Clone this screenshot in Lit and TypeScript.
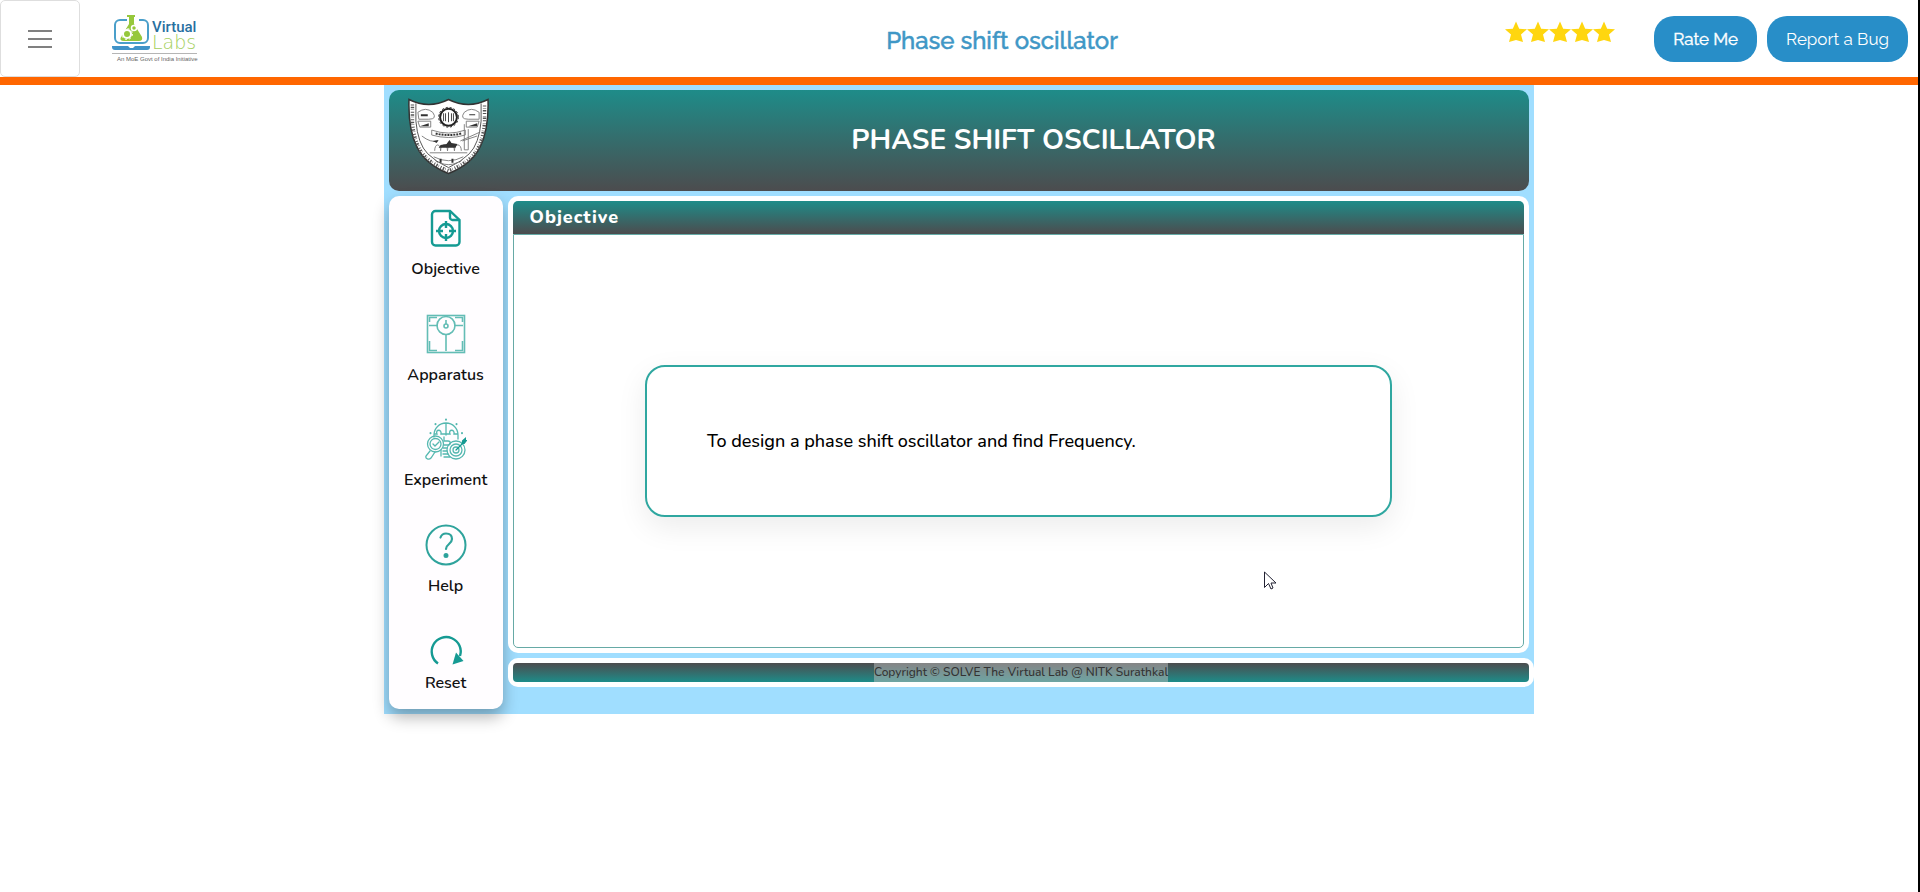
import { LitElement, html, css, svg } from "lit";
import { customElement } from "lit/decorators.js";

const TEAL = "#159a93";

const iconObjective = svg`<svg width="42" height="42" viewBox="0 0 42 42" fill="none" stroke="${TEAL}" stroke-width="2.4" aria-hidden="true">
  <path d="M10.5 4H25l9.500 9v22a3.500 3.500 0 0 1-3.500 3.500H10.500A3.500 3.500 0 0 1 7 35V7.500A3.500 3.500 0 0 1 10.500 4Z"/>
  <path d="M25 4v6.500a2.500 2.500 0 0 0 2.500 2.500h7"/>
  <circle cx="21" cy="24" r="7"/><path d="M21 14v7M21 27v7M11 24h7M24 24h7"/></svg>`;

const iconApparatus = svg`<svg width="42" height="42" viewBox="0 0 42 42" fill="none" stroke="#63bdb5" stroke-width="1.600" aria-hidden="true">
  <rect x="2.500" y="2.500" width="37" height="37"/><path d="M4.500 9V4.500H12M30 4.500h7.500V9M4.500 28v9.500H12M30 37.500h7.500V28"/>
  <path d="M4 12.500h9M29 12.500h9M21 22v16"/><circle cx="21" cy="12.500" r="9"/><circle cx="21" cy="13" r="2"/><path d="M21 7v4"/></svg>`;

const iconExperiment = svg`<svg width="42" height="42" viewBox="0 0 42 42" fill="none" stroke="#55b8b0" stroke-width="1.300" stroke-linecap="round" aria-hidden="true">
  <path d="M9 19V17a12 12 0 0 1 24 0v4M21 5v12M9 16h3c-2-5 5-5 4 0h5M21 16h4c-2-5 5-5 4 0h4M19 19v4h4c3 0 3 4 0 4h-4M18 30h4M18 33h4M18 36h5M19 39h6"/>
  <path d="M21 1.500v.200M10.500 6v.200M31.500 6v.200M5.500 15v.200M37 15v.200" stroke-width="2"/>
  <circle cx="10.500" cy="26" r="8"/><circle cx="10.500" cy="26" r="5.500"/><path d="m8 26 2 2 4-4M5 33l-4 5c-1 3 3 4 5 2l4-6M16 32v6"/>
  <circle cx="31" cy="32" r="9"/><circle cx="31" cy="32" r="6"/><circle cx="31" cy="32" r="3"/><path d="m31 32 9-9" stroke="${TEAL}"/><path d="m36.500 26 .500-3.500 4-3.500v3h1.500l-3 4Z" fill="${TEAL}" stroke="none"/></svg>`;

const iconHelp = svg`<svg width="42" height="42" viewBox="0 0 42 42" fill="none" stroke="#2fa39c" stroke-width="2" aria-hidden="true">
  <circle cx="21" cy="21" r="19.500"/><path stroke-width="2.200" stroke-linecap="round" d="M15.500 13.500c1-3 3-4 5.500-4 3.500 0 6 2 6 5.500 0 5-6 5-6 10"/><circle cx="21" cy="31.500" r="1.500" fill="${TEAL}"/></svg>`;

const iconReset = svg`<svg width="42" height="42" viewBox="0 -5 42 42" fill="none" stroke="${TEAL}" stroke-width="2.400" aria-hidden="true">
  <path d="M13 29.500A14.500 14.500 0 1 1 35 22"/><path d="M31 18.500 38.500 27 27.500 30.500Z" fill="${TEAL}" stroke="none"/></svg>`;

const items = [
  { label: "Objective", icon: iconObjective },
  { label: "Apparatus", icon: iconApparatus },
  { label: "Experiment", icon: iconExperiment },
  { label: "Help", icon: iconHelp },
  { label: "Reset", icon: iconReset },
];

@customElement("lab-topbar")
export class LabTopbar extends LitElement {
  static styles = css`
    :host { display: block; border-bottom: 8px solid #ff6600; font-family: Raleway, Lato, sans-serif; }
    .bar { display: grid; grid-template-columns: 1fr auto 1fr; height: 77px; background: #fff; }
    .left { display: flex; align-items: center; gap: 32px; }
    .burger { width: 80px; height: 77px; border: 1px solid #dedede; border-radius: 5px; background: #fff; padding: 0;
      display: flex; flex-direction: column; align-items: center; justify-content: center; gap: 6px; }
    .line { width: 24px; height: 2px; background: #808080; }
    .logo { display: block; }
    .title { margin: 0; align-self: center; padding: 4px 0 0 86px; font-size: 24px; line-height: 30px; font-weight: 500; color: #3f97c6; -webkit-text-stroke: 0.500px #3f97c6; }
    .right { display: flex; justify-content: flex-end; align-items: center; padding-right: 10px; }
    .stars { display: flex; margin-right: 39px; padding-bottom: 14px; }
    .buttons { display: flex; gap: 10px; }
    .pill { height: 46px; border: 0; border-radius: 20px; background: #288ec8; color: #fff; padding: 0 19px;
      font-family: inherit; font-size: 17px; line-height: 24px; }
    .pill.strong { -webkit-text-stroke: 0.400px #fff; }
  `;
  render() {
    return html`<header class="bar">
      <div class="left">
        <button class="burger" aria-label="Menu"><span class="line"></span><span class="line"></span><span class="line"></span></button>
        <svg class="logo" width="88" height="50" viewBox="0 0 88 50" role="img" aria-label="Virtual Labs">
          <path d="M15 6H8a5 5 0 0 0-5 5v13a5 5 0 0 0 5 5h23a5 5 0 0 0 5-5V11a5 5 0 0 0-5-5h-4" fill="none" stroke="#4a9fca" stroke-width="2"/>
          <path d="M0 32h16l2 2h3l2-2h15v1q0 3-3 3H3q-3 0-3-3Z" fill="#3f93c8"/>
          <path d="M15 1h8v2h-1v7l8 13q1 4-3 4H12q-5 0-3-4l8-13V3h-2Z" fill="#96c83c"/>
          <circle cx="15" cy="20" r="4" fill="none" stroke="#fff" stroke-width="2"/><circle cx="15" cy="20" r="5.500" fill="none" stroke="#fff" stroke-dasharray="2 2.300"/>
          <circle cx="22" cy="14" r="2.500" fill="none" stroke="#fff" stroke-width="1.500"/>
          <text x="40" y="18" font-family="Roboto, sans-serif" font-size="15" font-weight="500" fill="#286f9f">Virtual</text>
          <text x="40" y="35" font-family="DejaVu Sans, sans-serif" font-size="19" font-weight="200" fill="#a4cf5c">Labs</text>
          <path d="M0 39.500h85" stroke="#b5b5b5"/>
          <text x="5" y="47" font-family="Liberation Sans, sans-serif" font-size="6" fill="#666">An MoE Govt of India Initiative</text>
        </svg>
      </div>
      <h1 class="title">Phase shift oscillator</h1>
      <div class="right">
        <div class="stars" role="img" aria-label="5 stars">
          ${[0, 1, 2, 3, 4].map(() => html`<svg width="22" height="22" viewBox="0 0 22 22"><path d="M11 .500 14.200 7.700 22 8.200l-6 5.300 2 7.500-7-2-7 2 2-7.500L0 8.200l7.800-.500Z" fill="#ffd60f"/></svg>`)}
        </div>
        <div class="buttons"><button class="pill strong">Rate Me</button><button class="pill">Report a Bug</button></div>
      </div>
    </header>`;
  }
}

@customElement("lab-simulator")
export class LabSimulator extends LitElement {
  static styles = css`
    :host { display: grid; grid-template-columns: 114px 1fr; gap: 5px; width: 60%; box-sizing: border-box; margin: 0 auto;
      padding: 5px; background: #a0deff; font-family: Nunito, "Noto Sans", sans-serif; }
    .banner { grid-column: 1 / -1; height: 101px; box-sizing: border-box; border-radius: 10px; display: flex; align-items: flex-start; padding: 8px 19px;
      background: linear-gradient(#1e8c89, #4c4c4e); }
    .crest { display: block; }
    .banner-title { flex: 1; margin: 0; padding-left: 68px; text-align: center; font-size: 28px; line-height: 84px; font-weight: 700; color: #fff; }
    .side { height: 513px; box-sizing: border-box; display: flex; flex-direction: column; align-items: center; justify-content: space-between;
      padding: 11px 0 14px; background: #fffdff; border-radius: 10px; box-shadow: 0 8px 16px rgba(0, 0, 0, 0.300); }
    .item { border: 0; background: none; padding: 0; display: flex; flex-direction: column; align-items: center; gap: 8px;
      font-family: inherit; font-size: 16px; line-height: 24px; font-weight: 600; color: #111; }
    .item:last-child { gap: 0; }
    .work { display: flex; flex-direction: column; gap: 5px; }
    .panel { height: 457px; box-sizing: border-box; padding: 5px; background: #fff; border-radius: 10px; display: flex; flex-direction: column; }
    .panel-title { margin: 0; padding: 0 17px; font-size: 18px; line-height: 33px; font-weight: 800; letter-spacing: 1px; color: #fff;
      border-radius: 5px 5px 0 0; background: linear-gradient(#1e8c89, #4c4c4e); }
    .stage { flex: 1; display: flex; align-items: center; justify-content: center; border: 1px solid #66aaa6; border-radius: 0 0 5px 5px; }
    .card { width: 74%; box-sizing: border-box; padding: 60px; border: 2px solid #2fa7a0; border-radius: 20px; box-shadow: 0 10px 30px rgba(0, 0, 0, 0.080);
      font-size: 18px; line-height: 28px; font-weight: 500; color: #000; margin: 0; }
    .foot { margin-right: -5px; padding: 5px; background: #fff; border-radius: 10px; }
    .foot-bar { display: flex; justify-content: center; border-radius: 4px; background: linear-gradient(#4c4c4e, #1e8c89); }
    .copy { font-size: 12px; line-height: 19px; font-weight: 500; color: #333; background: rgba(190, 190, 190, 0.500); }
  `;
  render() {
    return html`
      <header class="banner">
        <svg class="crest" width="81" height="78" viewBox="0 0 82 78" role="img" aria-label="NITK Surathkal">
          <path d="M1 1q20 10 40 0 20 10 40 0Q82 31 73 49 64 67 41 76 18 67 9 49 0 31 1 1Z" fill="#fff" stroke="#333" stroke-width="1.500"/>
          <path d="M8 5v18q2 23 12 33 8 8 21 14 13-6 21-14 10-10 12-33V5" fill="none" stroke="#555"/>
          <path d="M4.500 6v18q2 24 13 35 9 9 23.500 14 14.500-5 23.500-14 11-11 13-35V6" fill="none" stroke="#555" stroke-width="3.500" stroke-dasharray="1 1.500 1.500 1 .500 2"/>
          <circle cx="41" cy="19" r="8.500" fill="#fff" stroke="#222" stroke-width="2"/><circle cx="41" cy="19" r="10" fill="none" stroke="#222" stroke-dasharray="2 2"/>
          <path d="M36 15v8M38 15v8M41 14v10M44 15v8M46 15v8" stroke="#444" fill="none"/>
          <g fill="none" stroke="#777" stroke-width=".900"><path d="M10 14q8-6 15 0 5 7-4 7H11zM10 23h13v6H12zM72 14q-8-6-15 0-5 7 4 7h11zM72 23H59v6h11z"/>
          <path d="M24 32q17 6 34 0v5q-17 5-34 0ZM14 38q9 7 16 5M73 34 53 43M70 38l-15 5M57 26v26h4V31M27 53c0-8 6-8 6 0 0-8 7-8 7 0 0-8 7-8 7 0 0-8 7-8 7 0M22 55h38M26 59q15 8 30 0M32 65q9 4 18 0M25 60l5 5M52 65l5-5"/></g>
          <path d="M31 50h17l2-4-6-1-2-3-3 4-6 1ZM12 28l9-3v3zM61 28h9v-3zM25 43l6-1-2 3zM32 61h2v4h-2zM44 61h2v4h-2zM13 16h7v2h-7zM62 16h6v1h-6z" fill="#333"/>
          <path d="M28 35.500q13 3 26 0" fill="none" stroke="#333" stroke-width="2" stroke-dasharray="2 1"/>
        </svg>
        <h2 class="banner-title">PHASE SHIFT OSCILLATOR</h2>
      </header>
      <nav class="side">${items.map((i) => html`<button class="item">${i.icon}<span>${i.label}</span></button>`)}</nav>
      <main class="work">
        <section class="panel">
          <h3 class="panel-title">Objective</h3>
          <div class="stage"><p class="card">To design a phase shift oscillator and find Frequency.</p></div>
        </section>
        <footer class="foot"><div class="foot-bar"><span class="copy">Copyright © SOLVE The Virtual Lab @ NITK Surathkal</span></div></footer>
      </main>`;
  }
}

@customElement("app-root")
export class AppRoot extends LitElement {
  static styles = css`
    :host { display: block; position: relative; min-height: 100vh; box-sizing: border-box; border-right: 2px solid #000; background: #fff; }
    .cursor { position: absolute; left: 1264px; top: 571px; }
  `;
  render() {
    return html`<lab-topbar></lab-topbar><lab-simulator></lab-simulator>
      <svg class="cursor" width="13" height="20" viewBox="0 0 13 20" aria-hidden="true"><path d="M.500 1v15.500l4-4 2.500 5.500 2-1-2-5h5Z" fill="#fff" stroke="#223" stroke-width="1"/></svg>`;
  }
}
